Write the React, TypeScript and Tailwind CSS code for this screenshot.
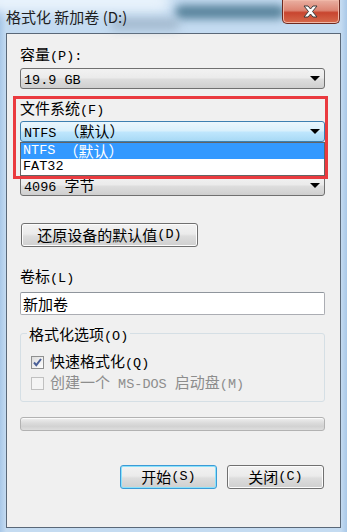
import React from "react";

const CJK = /([\u2e80-\u9fff\u3000-\u303f\uff00-\uffef]+)/;

// SimSun-like mix: half-width ascii in mono, CJK a bit larger
function T({ text }: { text: string }) {
  const parts = text.split(CJK);
  return (
    <>
      {parts.map((p, i) =>
        p === "" ? null : CJK.test(p) ? (
          <span key={i} className="font-['Noto_Sans_CJK_SC',sans-serif] text-[15px]">
            {p}
          </span>
        ) : (
          <span key={i} className="font-['Liberation_Mono',monospace] text-[13.5px] whitespace-pre">
            {p}
          </span>
        )
      )}
    </>
  );
}

const Arrow = () => (
  <svg width="10" height="5" viewBox="0 0 10 5">
    <path d="M0 0h10L5 5z" fill="#000" />
  </svg>
);

function Combo({ value, active }: { value: string; active?: boolean }) {
  return (
    <div
      className={`flex h-[21px] items-center justify-between rounded-[3px] border pl-[3px] pr-[4px] leading-[16px] text-black ${
        active
          ? "border-[#3c7fb1] bg-[linear-gradient(#eaf6fd_0%,#d9f0fc_45%,#bee6fd_55%,#a7d9f5_100%)]"
          : "border-[#707070] bg-[linear-gradient(#f2f2f2_0%,#ebebeb_45%,#dddddd_55%,#cfcfcf_100%)]"
      }`}
    >
      <span>
        <T text={value} />
      </span>
      <Arrow />
    </div>
  );
}

function Btn({ label, primary, className }: { label: string; primary?: boolean; className?: string }) {
  return (
    <div
      className={`flex h-[24px] items-center justify-center rounded-[3px] border leading-[16px] text-black bg-[linear-gradient(#f2f2f2_0%,#ebebeb_45%,#dddddd_55%,#cfcfcf_100%)] ${
        primary ? "border-[#3c9ad6] shadow-[inset_0_0_0_1px_#8ae2fb]" : "border-[#707070] shadow-[inset_0_0_0_1px_#fcfcfc]"
      } ${className ?? ""}`}
    >
      <T text={label} />
    </div>
  );
}

export default function App() {
  return (
    <div className="relative flex h-[532px] w-[347px] flex-col overflow-hidden bg-[linear-gradient(90deg,#a9c8e8_0px,#c4dbf1_6px,#c4dbf1_341px,#a9c8e8_347px)] px-[6px] pb-[4px] font-['Noto_Sans_CJK_SC',sans-serif]">
      {/* glass smears behind the title */}
      <div className="absolute left-[-20px] top-[-10px] h-[22px] w-[190px] rounded-full bg-[#e8f2fb] blur-[6px]" />
      <div className="absolute left-[175px] top-[5px] h-[14px] w-[110px] rounded-full bg-[#3f6f88] opacity-80 blur-[4px]" />
      <div className="absolute left-[110px] top-[18px] h-[12px] w-[70px] rounded-full bg-[#8ea4b8] opacity-60 blur-[5px]" />

      {/* title bar */}
      <div className="relative flex h-[33px] shrink-0 items-center">
        <span className="text-[15px] leading-[20px] text-[#1e1e1e]">格式化 新加卷 (D:)</span>
        <div className="absolute right-[1px] top-0 flex h-[24px] w-[58px] items-center justify-center rounded-b-[5px] border border-t-0 border-[#6e2a20] bg-[linear-gradient(#eab0a2_0%,#dc8573_45%,#c8452f_55%,#d66a4c_100%)] shadow-[inset_0_0_0_1px_#f0b8a8]">
          <svg width="16" height="14" viewBox="0 0 16 14">
            <path
              d="M1 1h4l2.5 3 2.5-3h4l-4.5 5.5 4.5 5.5h-4l-2.5-3-2.5 3h-4l4.5-5.5z"
              fill="#fff"
              stroke="#3a3a3a"
              strokeWidth="1"
              strokeLinejoin="round"
            />
          </svg>
        </div>
      </div>

      {/* client */}
      <div className="flex flex-1 flex-col border border-[#5a6878] bg-[#f0f0f0] pl-[13px] pr-[15px] leading-[16px] text-black">
        <div className="mt-[11px] h-[16px]">
          <T text="容量(P):" />
        </div>
        <div className="mt-[7px]">
          <Combo value="19.9 GB" />
        </div>

        {/* highlighted file system block */}
        <div className="relative z-10 -ml-[7px] -mr-[3px] mt-[7px] border-[3px] border-[#ea3a3f] pl-[4px]">
          <div className="h-[16px]">
            <T text="文件系统(F)" />
          </div>
          <div className="mt-[6px]">
            <Combo value="NTFS （默认）" active />
          </div>
          <div className="h-[34px] border border-[#646464] bg-white">
            <div className="flex h-[16px] items-center bg-[#3399ff] pl-[2px] text-white">
              <T text="NTFS （默认）" />
            </div>
            <div className="flex h-[16px] items-center pl-[2px]">
              <T text="FAT32" />
            </div>
          </div>
        </div>

        <div className="-mt-[4px]">
          <Combo value="4096 字节" />
        </div>

        <Btn label="还原设备的默认值(D)" className="ml-[1px] mt-[27px] w-[177px]" />

        <div className="mt-[20px] h-[16px]">
          <T text="卷标(L)" />
        </div>
        <div className="mt-[9px] flex h-[23px] items-center rounded-[2px] border border-[#abadb3] border-t-[#8f959c] bg-white pl-[2px]">
          <T text="新加卷" />
        </div>

        <fieldset className="mt-[10px] rounded-[3px] border border-[#d5dfe5] pb-[10px]">
          <legend className="ml-[6px] h-[16px] px-[2px]">
            <T text="格式化选项(O)" />
          </legend>
          <div className="mt-[13px] flex h-[16px] items-center gap-[6px] pl-[10px]">
            <div className="flex h-[13px] w-[13px] items-center justify-center border border-[#8e8f8f] bg-[linear-gradient(135deg,#dcdcdc,#ffffff)]">
              <svg width="9" height="9" viewBox="0 0 9 9">
                <path d="M1 4.5l2.3 2.6L8 1" fill="none" stroke="#4a5f97" strokeWidth="2" />
              </svg>
            </div>
            <span>
              <T text="快速格式化(Q)" />
            </span>
          </div>
          <div className="mt-[5px] flex h-[16px] items-center gap-[6px] pl-[10px] text-[#8d8d8d]">
            <div className="h-[13px] w-[13px] border border-[#c0c0c0] bg-[#f4f4f4]" />
            <span>
              <T text="创建一个 MS-DOS 启动盘(M)" />
            </span>
          </div>
        </fieldset>

        <div className="mt-[15px] h-[14px] rounded-[3px] border border-[#b2b2b2] bg-[linear-gradient(#f0f0f0_0%,#dcdcdc_40%,#d2d2d2_70%,#dedede_100%)] shadow-[inset_0_1px_0_#fafafa]" />

        <div className="mr-[1px] mt-[34px] flex justify-end gap-[10px]">
          <Btn label="开始(S)" primary className="w-[97px]" />
          <Btn label="关闭(C)" className="w-[97px]" />
        </div>
      </div>
    </div>
  );
}
